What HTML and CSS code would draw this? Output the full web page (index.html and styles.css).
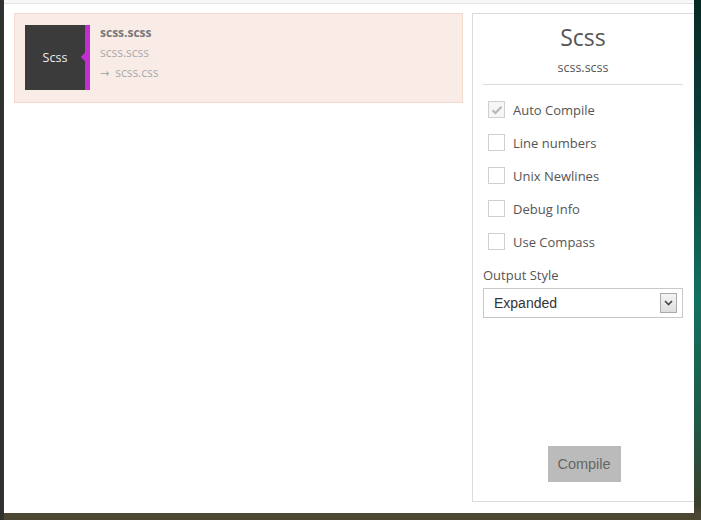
FILE: index.html
```html
<!DOCTYPE html>
<html>
<head>
<meta charset="utf-8">
<link rel="stylesheet" href="styles.css">
</head>
<body>
<div class="modal">
  <div class="topbar"></div>
  <div class="content">
    <div class="files">
      <div class="card">
        <div class="thumb">
          <span class="thumb-label">Scss</span>
          <span class="thumb-bar"></span>
        </div>
        <div class="file-info">
          <div class="file-name">scss.scss</div>
          <div class="file-path">scss.scss</div>
          <div class="file-path"><span class="arrow">→</span>scss.css</div>
        </div>
      </div>
    </div>
    <div class="panel">
      <div class="panel-title">Scss</div>
      <div class="panel-sub">scss.scss</div>
      <div class="divider"></div>
      <div class="option"><span class="box checked"><svg width="12" height="10" viewBox="0 0 12 10"><path d="M1.5 5.2 L4.5 8 L10.5 1.8" fill="none" stroke="#b5b5b5" stroke-width="2"/></svg></span><span class="opt-label">Auto Compile</span></div>
      <div class="option"><span class="box"></span><span class="opt-label">Line numbers</span></div>
      <div class="option"><span class="box"></span><span class="opt-label">Unix Newlines</span></div>
      <div class="option"><span class="box"></span><span class="opt-label">Debug Info</span></div>
      <div class="option"><span class="box"></span><span class="opt-label">Use Compass</span></div>
      <div class="field-label">Output Style</div>
      <div class="select">
        <span class="select-value">Expanded</span>
        <span class="select-arrow"><svg width="9" height="6" viewBox="0 0 9 6"><path d="M1 1 L4.5 4.5 L8 1" fill="none" stroke="#444" stroke-width="1.6"/></svg></span>
      </div>
      <button class="compile">Compile</button>
    </div>
  </div>
</div>
</body>
</html>
```

FILE: styles.css
```css
html, body {
  margin: 0;
  padding: 0;
}
body {
  width: 701px;
  height: 520px;
  overflow: hidden;
  background:
    linear-gradient(to right, #2f2f2f 0, #343434 4px, transparent 4px, transparent 694px, transparent 694px),
    linear-gradient(to bottom, #082a27 0, #0b3d37 120px, #13705f 300px, #1f5a48 420px, #3a3f2c 505px, #4a4632 513px, #4b4733 520px);
  font-family: "Open Sans", "Liberation Sans", sans-serif;
}
.modal {
  margin-left: 4px;
  width: 690px;
  height: 513px;
  background: #fff;
  overflow: hidden;
  display: flex;
  flex-direction: column;
}
.topbar {
  height: 3px;
  background: #f7f7f7;
  border-bottom: 1px solid #e3e3e3;
  flex: none;
}
.content {
  display: flex;
  gap: 9px;
  padding: 9px 0 0 10px;
  flex: 1;
  min-height: 0;
}
.files {
  width: 449px;
  flex: none;
}
.card {
  box-sizing: border-box;
  height: 90px;
  background: #f9ece7;
  border: 1px solid #f2d9ce;
  padding: 11px 10px 0 10px;
  display: flex;
  gap: 10px;
}
.thumb {
  width: 65px;
  height: 65px;
  background: #3c3b3b;
  position: relative;
  display: flex;
  flex: none;
}
.thumb-label {
  width: 60px;
  display: flex;
  align-items: center;
  justify-content: center;
  color: #eee;
  font-size: 12.5px;
}
.thumb-bar {
  width: 5px;
  background: #c22ecf;
}
.thumb-bar::before {
  content: "";
  position: absolute;
  right: 2px;
  top: 29px;
  width: 6px;
  height: 6px;
  background: #c22ecf;
  transform: rotate(45deg);
}
.file-info {
  margin-top: -2px;
  line-height: 20px;
  font-size: 12px;
}
.file-name {
  font-weight: 700;
  color: #777;
}
.file-path {
  color: #aaa;
}
.arrow {
  font-family: "DejaVu Sans", sans-serif;
  font-size: 11px;
  margin-right: 6px;
}
.panel {
  box-sizing: border-box;
  width: 222px;
  height: 489px;
  flex: none;
  border: 1px solid #dcdcdc;
  border-right: none;
  padding: 0 11px 0 10px;
  display: flex;
  flex-direction: column;
}
.panel-title {
  margin-top: 8px;
  text-align: center;
  font-size: 23px;
  line-height: 30px;
  color: #555;
}
.panel-sub {
  margin-top: 7px;
  text-align: center;
  font-size: 12.5px;
  line-height: 18px;
  color: #555;
}
.divider {
  margin-top: 7px;
  height: 1px;
  background: #dcdcdc;
  margin-bottom: 8px;
}
.option {
  height: 33px;
  display: flex;
  align-items: center;
  padding-left: 5px;
  gap: 8px;
}
.box {
  box-sizing: border-box;
  width: 17px;
  height: 17px;
  border: 1px solid #cfcfcf;
  background: #fff;
  display: flex;
  align-items: center;
  justify-content: center;
}
.box.checked {
  background: #f6f6f6;
}
.opt-label {
  font-size: 13px;
  color: #555;
}
.field-label {
  margin-top: 8px;
  font-size: 13px;
  line-height: 18px;
  color: #555;
}
.select {
  box-sizing: border-box;
  margin-top: 4px;
  height: 30px;
  border: 1px solid #c8c8c8;
  display: flex;
  align-items: center;
  justify-content: space-between;
  padding: 0 5px 0 10px;
}
.select-value {
  font-family: "Liberation Sans", Arial, sans-serif;
  font-size: 14px;
  color: #333;
}
.select-arrow {
  box-sizing: border-box;
  width: 17px;
  height: 20px;
  border: 1px solid #aaa;
  background: linear-gradient(#f4f4f4, #dedede);
  display: flex;
  align-items: center;
  justify-content: center;
}
.compile {
  margin-top: auto;
  margin-bottom: 19px;
  align-self: center;
  position: relative;
  left: 1px;
  width: 73px;
  height: 36px;
  border: none;
  background: #bbb;
  color: #666;
  font-family: "Liberation Sans", Arial, sans-serif;
  font-size: 14.5px;
  padding: 0;
}
```
